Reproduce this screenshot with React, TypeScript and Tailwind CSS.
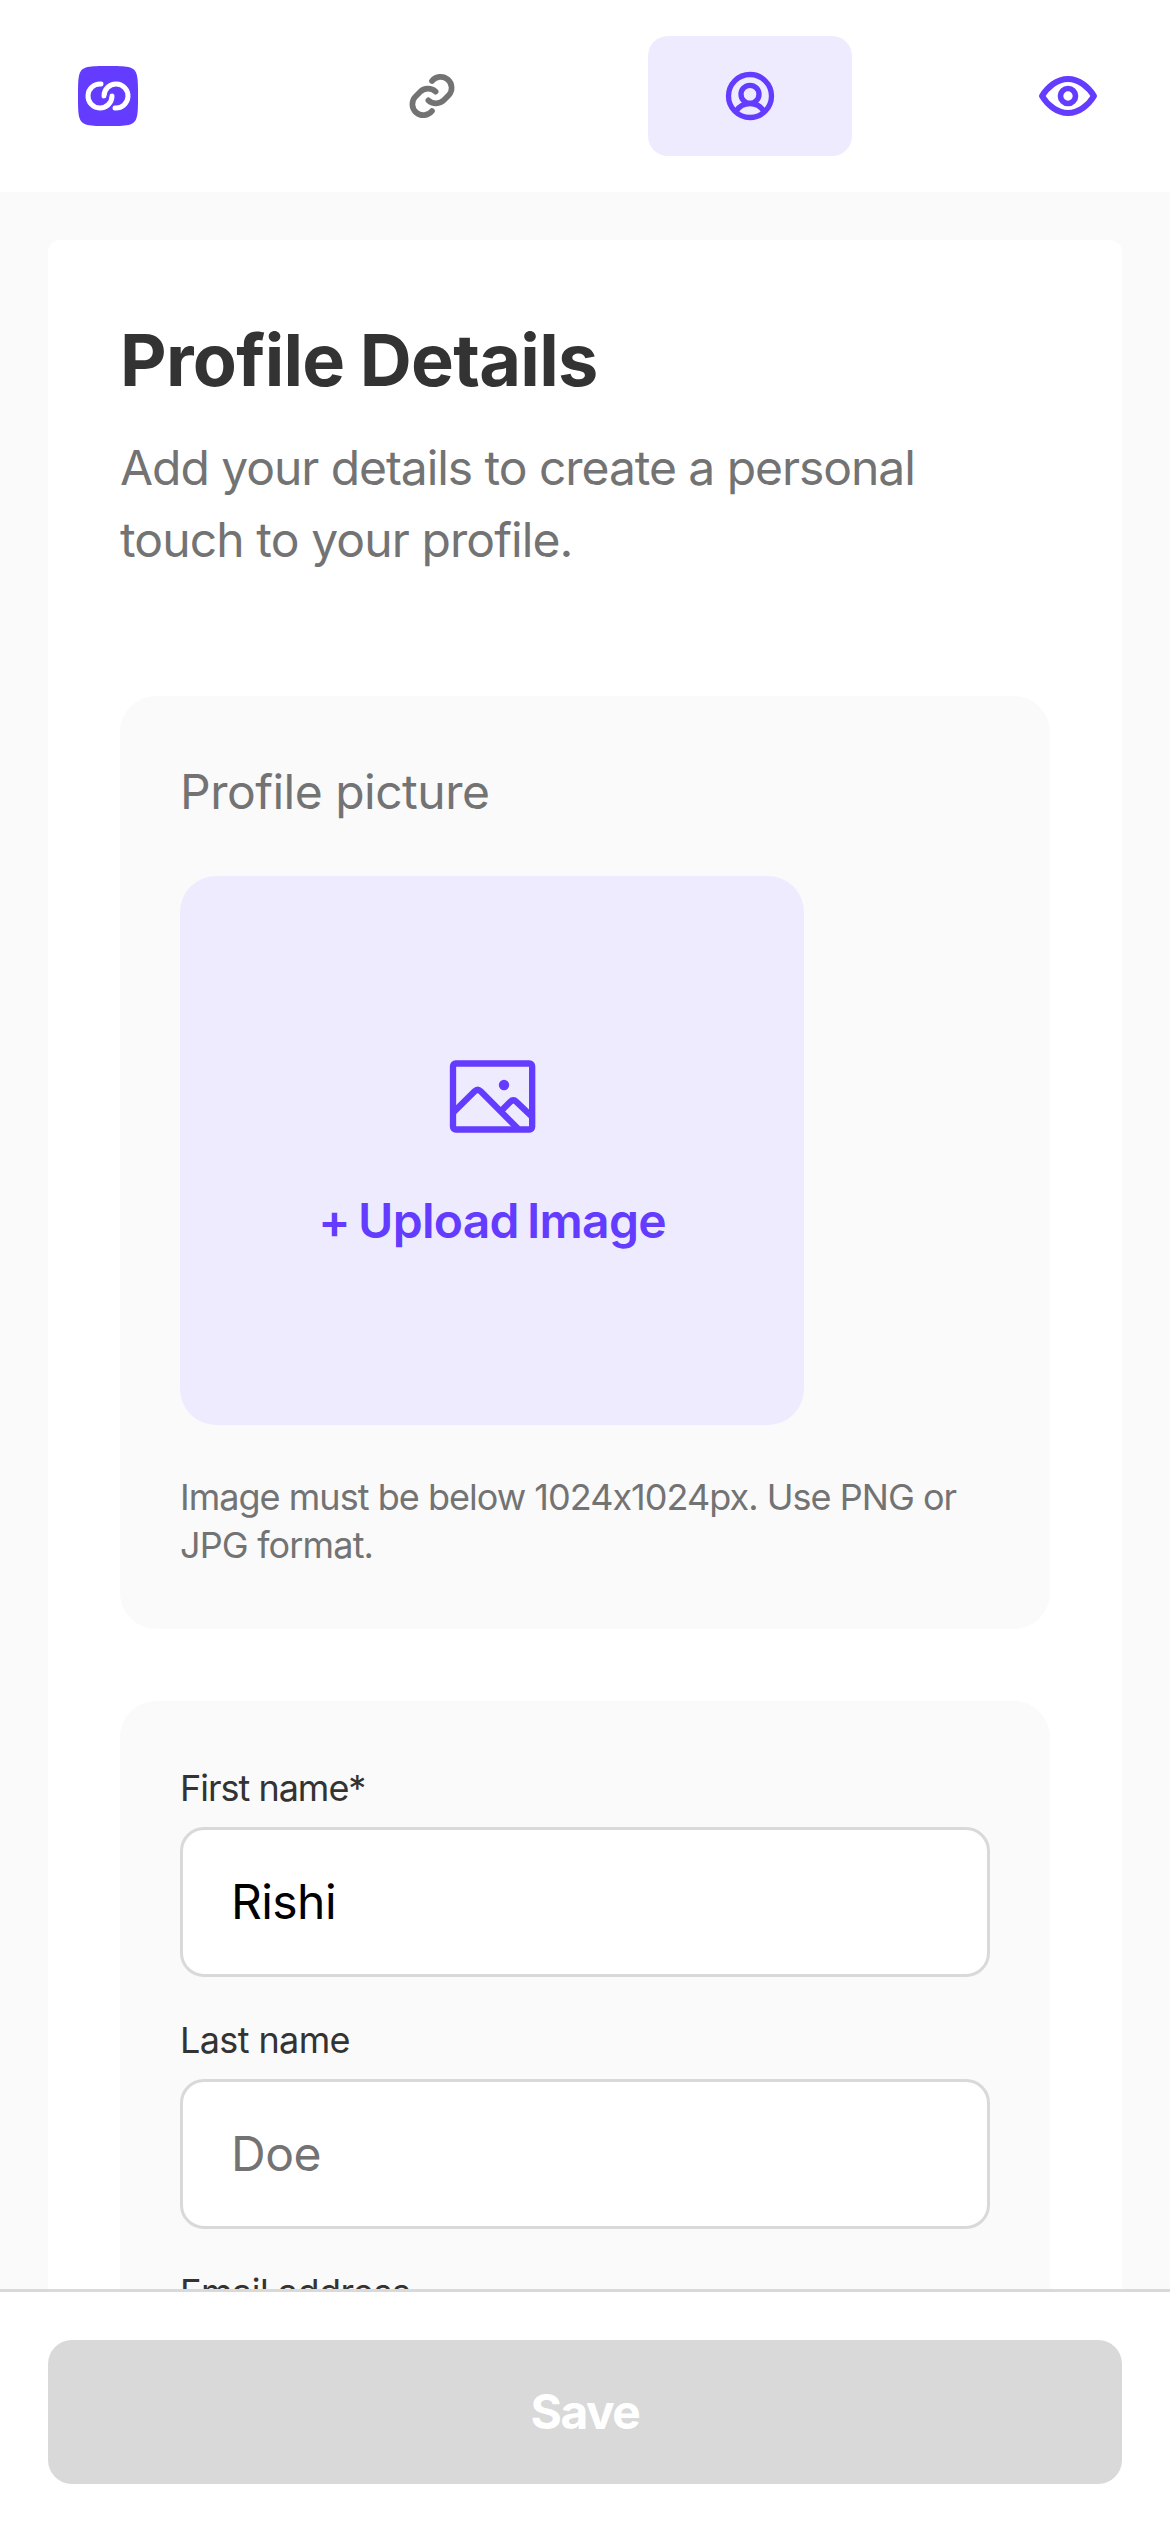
import type { ReactNode } from "react";

function LogoIcon() {
  return (
    <svg viewBox="54 48 180 180" className="size-[60px]" fill="none" aria-hidden="true">
      <path
        d="M54 138C54 110 54 92 57 77C61 61 67 55 83 51C98 48 116 48 144 48S190 48 205 51C221 55 227 61 231 77C234 92 234 110 234 138S234 184 231 199C227 215 221 221 205 225C190 228 172 228 144 228S98 228 83 225C67 221 61 215 57 199C54 184 54 166 54 138Z"
        fill="#633CFF"
      />
      <g stroke="#fff" strokeWidth="15" strokeLinecap="round">
        <path d="M123 102A36 36 0 1 0 156 138" />
        <path d="M165 174A36 36 0 1 0 132 138" />
      </g>
    </svg>
  );
}

function LinkIcon() {
  return (
    <svg viewBox="18 30 216 216" className="size-[72px]" fill="none" stroke="#737373" strokeWidth="17" strokeLinecap="round" aria-hidden="true">
      <path d="M126 93A33 33 0 1 1 176 136L162 150A34 34 0 0 1 115 151" />
      <path d="M126 183A33 33 0 1 1 76 140L90 126A34 34 0 0 1 137 125" />
    </svg>
  );
}

function ProfileIcon() {
  return (
    <svg viewBox="222 90 216 216" className="size-[72px]" fill="none" stroke="#633CFF" strokeWidth="16" aria-hidden="true">
      <circle cx="330" cy="198" r="64.5" />
      <circle cx="330" cy="193" r="27" />
      <path d="M289 243A48.75 48.75 0 0 1 371 243" />
    </svg>
  );
}

function EyeIcon() {
  return (
    <svg viewBox="36 30 216 216" className="size-[72px]" fill="none" stroke="#633CFF" strokeLinejoin="round" aria-hidden="true">
      <path
        strokeWidth="18"
        d="M66 138C82 112 110 87 144 87S206 112 222 138C206 164 178 189 144 189S82 164 66 138Z"
      />
      <circle cx="144" cy="138" r="22.5" strokeWidth="17" />
    </svg>
  );
}

function ImageIcon() {
  return (
    <svg viewBox="27 12 315 315" className="size-[105px]" fill="none" stroke="#633CFF" strokeWidth="19" aria-hidden="true">
      <rect x="66" y="70.5" width="237.5" height="198" rx="8" />
      <path d="M68 216L131 154Q140 145 149 154L261 266" />
      <path d="M211 212L238 185Q247 176 256 185L301 228" />
      <circle cx="219" cy="135" r="15.5" fill="#633CFF" stroke="none" />
    </svg>
  );
}

function Panel({ children }: { children: ReactNode }) {
  return <section className="rounded-[36px] bg-[#fafafa] p-[60px]">{children}</section>;
}

interface FieldProps {
  id: string;
  label: string;
  labelClass: string;
  inputClass?: string;
  value?: string;
  placeholder?: string;
}

function Field({ id, label, labelClass, inputClass = "", value, placeholder }: FieldProps) {
  return (
    <div className="flex flex-col items-start gap-3">
      <label htmlFor={id} className={`text-[36px] leading-[54px] text-[#333333] ${labelClass}`}>
        {label}
      </label>
      <input
        id={id}
        defaultValue={value}
        placeholder={placeholder}
        className={`h-[150px] w-full rounded-3xl border-3 border-[#d9d9d9] bg-white px-12 pb-[2px] text-[48px] text-black placeholder:text-[#737373] ${inputClass}`}
      />
    </div>
  );
}

export default function App() {
  return (
    <div className="flex h-[2532px] w-[1170px] flex-col overflow-hidden bg-[#fafafa] font-['Inter',sans-serif]">
      <header className="flex h-48 shrink-0 items-center justify-between bg-white px-12">
        <div className="flex w-[120px] justify-center">
          <LogoIcon />
        </div>
        <nav className="flex gap-[114px]">
          <button className="flex h-[120px] w-[204px] items-center justify-center" aria-label="Links">
            <LinkIcon />
          </button>
          <button className="flex h-[120px] w-[204px] items-center justify-center rounded-[20px] bg-[#efebff]" aria-label="Profile">
            <ProfileIcon />
          </button>
        </nav>
        <button className="flex w-[108px] justify-center" aria-label="Preview">
          <EyeIcon />
        </button>
      </header>

      <main className="min-h-0 flex-1 overflow-hidden p-12">
        <div className="rounded-xl bg-white p-[72px]">
          <h1 className="text-[72px] leading-[96px] font-bold tracking-[-0.01em] whitespace-nowrap text-[#333333] [word-spacing:-1px]">
            Profile Details
          </h1>
          <p className="mt-6 text-[48px] leading-[72px] whitespace-nowrap text-[#737373]">
            <span className="tracking-[-0.022em]">Add your details to create a personal</span>
            <br />
            <span className="tracking-[-0.0187em]">touch to your profile.</span>
          </p>

          <div className="mt-[120px] flex flex-col gap-[72px]">
            <Panel>
              <h2 className="text-[48px] leading-[72px] tracking-[-0.0105em] text-[#737373]">
                Profile picture
              </h2>
              <button className="mt-12 flex h-[549px] w-[624px] flex-col items-center justify-center gap-9 rounded-[36px] bg-[#efebff]">
                <ImageIcon />
                <span className="text-[48px] leading-[72px] font-semibold tracking-[-0.0155em] text-[#633CFF] [word-spacing:-3px]">
                  + Upload Image
                </span>
              </button>
              <p className="mt-12 text-[36px] leading-[48px] whitespace-nowrap text-[#737373]">
                <span className="tracking-[-0.027em]">Image must be below 1024x1024px. Use PNG or</span>
                <br />
                <span className="tracking-[-0.0235em]">JPG format.</span>
              </p>
            </Panel>

            <Panel>
              <form className="flex flex-col gap-9">
                <Field id="first" label="First name*" labelClass="tracking-[-0.028em]" inputClass="tracking-[-0.012em]" value="Rishi" />
                <Field id="last" label="Last name" labelClass="tracking-[-0.017em]" inputClass="tracking-[-0.01em]" placeholder="Doe" />
                <Field id="email" label="Email address" labelClass="tracking-[-0.015em]" placeholder="john@example.com" />
              </form>
            </Panel>
          </div>
        </div>
      </main>

      <footer className="shrink-0 border-t-3 border-[#d9d9d9] bg-white p-12">
        <button className="h-36 w-full rounded-3xl bg-[#d9d9d9] text-[48px] leading-[72px] font-bold tracking-[-0.032em] text-white">
          Save
        </button>
      </footer>
    </div>
  );
}
